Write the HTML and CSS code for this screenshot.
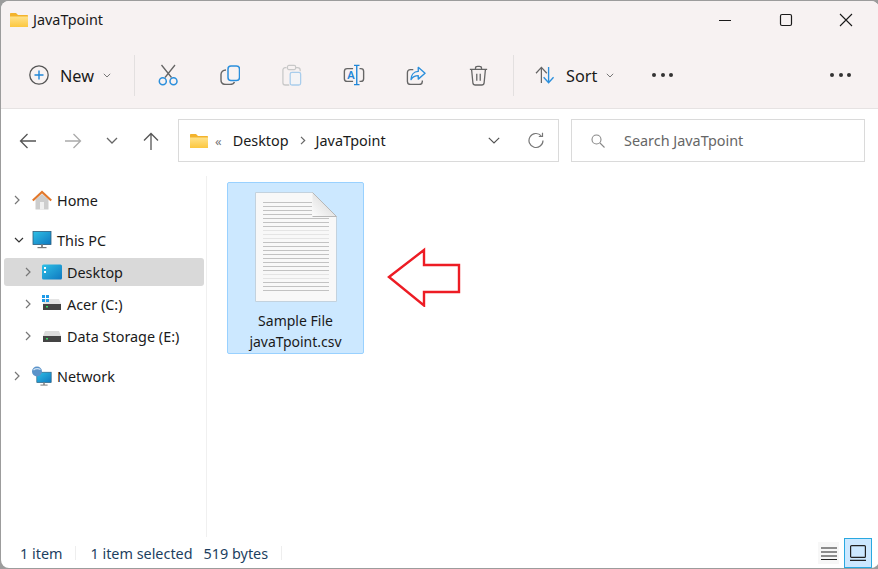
FILE: index.html
```html
<!DOCTYPE html>
<html lang="en">
<head>
  <meta charset="UTF-8" />
  <title>JavaTpoint</title>
  <link rel="stylesheet" href="styles.css">
</head>
<body>
  <div class="window">
    <div class="header">
      <div class="titlebar">
        <svg class="title-folder" width="18" height="14" viewBox="0 0 18 14"><use href="#folder"/></svg>
        <span class="title-text">JavaTpoint</span>
        <div class="win-buttons">
          <svg width="14" height="14" viewBox="0 0 14 14"><path d="M1 7.500h12" stroke="#1a1a1a" stroke-width="1"/></svg>
          <svg width="14" height="14" viewBox="0 0 14 14"><rect x="1.500" y="1.500" width="11" height="11" rx="1.500" fill="none" stroke="#1a1a1a" stroke-width="1.200"/></svg>
          <svg width="14" height="14" viewBox="0 0 14 14"><path d="M1 1l12 12M13 1L1 13" stroke="#1a1a1a" stroke-width="1.100"/></svg>
        </div>
      </div>
      <div class="toolbar">
        <div class="tool-new">
          <svg width="22" height="22" viewBox="0 0 22 22"><circle cx="11" cy="11" r="9.200" fill="none" stroke="#555" stroke-width="1.300"/><path d="M11 6.500v9M6.500 11h9" stroke="#1f86d8" stroke-width="1.400"/></svg>
          <span>New</span>
          <svg class="caret" width="8" height="5" viewBox="0 0 8 5"><path d="M.8.8L4 4l3.200-3.200" fill="none" stroke="#777"/></svg>
        </div>
        <div class="sep"></div>
        <div class="tool tool-first">
          <svg width="20" height="22" viewBox="0 0 20 22"><path d="M3.500 1l10 12.500M17 1L7 13.500" fill="none" stroke="#666" stroke-width="1.300"/><circle cx="4.800" cy="17.200" r="3.500" fill="none" stroke="#2b8fdc" stroke-width="1.500"/><circle cx="15.500" cy="17.200" r="3.500" fill="none" stroke="#2b8fdc" stroke-width="1.500"/></svg>
        </div>
        <div class="tool">
          <svg width="20" height="20" viewBox="0 0 20 20"><path d="M6 5C3 5 1 7 1 9.500V15c0 3 2 4.500 5 4.500h4c2.500 0 4-1 4.500-2.500" fill="none" stroke="#666" stroke-width="1.400"/><rect x="8" y="1" width="11.500" height="14.500" rx="3" fill="none" stroke="#2b8fdc" stroke-width="1.500"/></svg>
        </div>
        <div class="tool">
          <svg width="20" height="22" viewBox="0 0 22 24"><path d="M5 4H3.500C2 4 1 5 1 6.500v14C1 22 2 23 3.500 23H8M15 4h2C19 4 20 5 20 6.500V8" fill="none" stroke="#c8c8c8" stroke-width="1.400"/><rect x="6" y="1.500" width="9" height="4.500" rx="1.500" fill="none" stroke="#c8c8c8" stroke-width="1.300"/><rect x="9" y="9" width="11.500" height="14" rx="2" fill="#f4f4f6" stroke="#a9cdec" stroke-width="1.400"/></svg>
        </div>
        <div class="tool">
          <svg width="22" height="22" viewBox="0 0 24 24"><path d="M11 5H4.500C2.500 5 1.500 6 1.500 8v8c0 2 1 3 3 3H11M18 5h1.500c2 0 3 1 3 3v8c0 2-1 3-3 3H18" fill="none" stroke="#666" stroke-width="1.500"/><path d="M12 1.500h6M15 1.500v21M12 22.500h6" fill="none" stroke="#1f86d8" stroke-width="1.500"/><text class="rename-a" x="4.500" y="16.500">A</text></svg>
        </div>
        <div class="tool">
          <svg width="20" height="19" viewBox="0 0 22 21"><path d="M8 4H5C3 4 1.500 5.500 1.500 7.500v9.500c0 2 1.500 3.500 3.500 3.500h9.500c2 0 3.500-1.500 3.500-3.500v-1" fill="none" stroke="#666" stroke-width="1.500"/><path d="M13.500 1.500l7.500 6.500-7.500 6.500v-3.800c-3.500 0-6 1-8 4.300 0-5 3-8.700 8-9z" fill="none" stroke="#2b8fdc" stroke-width="1.500" stroke-linejoin="round"/></svg>
        </div>
        <div class="tool">
          <svg width="19" height="21" viewBox="0 0 22 24"><path d="M1 5h20M7.500 5V3.500C7.500 2 8.500 1.500 10 1.500h2c1.500 0 2.500.5 2.500 2V5M3 5l1.500 15.500C4.700 22 5.500 23 7.200 23h7.600c1.700 0 2.500-1 2.700-2.500L19 5M9 10v8M13 10v8" fill="none" stroke="#666" stroke-width="1.500"/></svg>
        </div>
        <div class="sep sep-sort"></div>
        <div class="tool-sort">
          <svg width="22" height="18" viewBox="0 0 22 20"><path d="M7 19V2M1 8l6-6.500L13 8" fill="none" stroke="#666" stroke-width="1.400"/><path d="M15 1v17.500M9.500 12.500l5.500 6 5.500-6" fill="none" stroke="#2b8fdc" stroke-width="1.500"/></svg>
          <span>Sort</span>
          <svg class="caret" width="8" height="5" viewBox="0 0 8 5"><path d="M.8.8L4 4l3.200-3.200" fill="none" stroke="#777"/></svg>
        </div>
        <div class="dots dots-first"><i></i><i></i><i></i></div>
        <div class="dots dots-last"><i></i><i></i><i></i></div>
      </div>
    </div>

    <div class="addressbar">
      <svg class="nav nav-back" width="18" height="16" viewBox="0 0 18 16"><path d="M17 8H1.500M8.500 1l-7 7 7 7" fill="none" stroke="#555" stroke-width="1.300"/></svg>
      <svg class="nav nav-forward" width="18" height="16" viewBox="0 0 18 16"><path d="M1 8h15.500M9.500 1l7 7-7 7" fill="none" stroke="#aaa" stroke-width="1.300"/></svg>
      <svg class="nav nav-down" width="12" height="8" viewBox="0 0 12 8"><path d="M1 1l5 5 5-5" fill="none" stroke="#666" stroke-width="1.300"/></svg>
      <svg class="nav nav-up" width="16" height="18" viewBox="0 0 16 18"><path d="M8 18V1.500M1 8.500l7-7 7 7" fill="none" stroke="#555" stroke-width="1.300"/></svg>
      <div class="address">
        <svg width="18" height="14" viewBox="0 0 18 14"><use href="#folder"/></svg>
        <span class="crumb-more">«</span>
        <span>Desktop</span>
        <svg class="crumb-sep" width="6" height="9" viewBox="0 0 6 9"><path d="M1 .8l3.700 3.700L1 8.200" fill="none" stroke="#666" stroke-width="1.200"/></svg>
        <span>JavaTpoint</span>
        <svg class="addr-down" width="12" height="7" viewBox="0 0 12 7"><path d="M.8.8L6 6 11.200.8" fill="none" stroke="#555" stroke-width="1.200"/></svg>
        <svg class="addr-refresh" width="16" height="17" viewBox="0 0 16 17"><path d="M13.200 3.800A7 7 0 1 0 15 8.500M14.500.8v3.700h-3.700" fill="none" stroke="#777" stroke-width="1.200"/></svg>
      </div>
      <div class="search">
        <svg width="14" height="14" viewBox="0 0 14 14"><circle cx="5.500" cy="5.500" r="4.500" fill="none" stroke="#888" stroke-width="1.100"/><path d="M9 9l4.500 4.500" stroke="#888" stroke-width="1.100"/></svg>
        <span>Search JavaTpoint</span>
      </div>
    </div>

    <div class="main">
      <div class="sidebar">
        <div class="nav-group">
          <div class="nav-row">
            <svg class="arrow" width="6" height="10" viewBox="0 0 6 10"><path d="M1 1l4 4-4 4" fill="none" stroke="#777" stroke-width="1.200"/></svg>
            <svg width="20" height="20" viewBox="0 0 20 20"><path d="M3.500 9.500L10 4l6.500 5.500V19.500h-13z" fill="#cdcdcd"/><rect x="8" y="12" width="4" height="7.500" fill="#f0f0f0"/><path d="M.8 10.500L10 2l9.200 8.500" fill="none" stroke="#e2782c" stroke-width="2.200"/></svg>
            <span>Home</span>
          </div>
        </div>
        <div class="nav-group">
          <div class="nav-row">
            <svg class="arrow" width="10" height="6" viewBox="0 0 10 6"><path d="M1 1l4 4 4-4" fill="none" stroke="#333" stroke-width="1.200"/></svg>
            <svg width="20" height="20" viewBox="0 0 20 20"><use href="#monitor"/></svg>
            <span>This PC</span>
          </div>
          <div class="nav-row sub">
            <div class="row-active"></div>
            <svg class="arrow" width="6" height="10" viewBox="0 0 6 10"><path d="M1 1l4 4-4 4" fill="none" stroke="#777" stroke-width="1.200"/></svg>
            <svg width="20" height="16" viewBox="0 0 20 16"><defs><linearGradient id="desk" x1="0" y1="0" x2="1" y2="1"><stop offset="0" stop-color="#2fc0e6"/><stop offset="1" stop-color="#0f78c0"/></linearGradient></defs><rect x="0" y="0.500" width="20" height="15" rx="1.500" fill="url(#desk)"/><rect x="2" y="3" width="2" height="2" fill="#fff"/><rect x="2" y="7" width="2" height="2" fill="#fff"/></svg>
            <span>Desktop</span>
          </div>
          <div class="nav-row sub">
            <svg class="arrow" width="6" height="10" viewBox="0 0 6 10"><path d="M1 1l4 4-4 4" fill="none" stroke="#777" stroke-width="1.200"/></svg>
            <svg width="20" height="18" viewBox="0 0 20 18"><path d="M3 4h14l2 5H1z" fill="#e4e4e4"/><rect x="1" y="9" width="18" height="6" fill="#444"/><rect x="4" y="11" width="2" height="1.500" fill="#3ddc6a"/><path d="M0 0h3v3H0zM4 0h3v3H4zM0 4h3v3H0zM4 4h3v3H4z" fill="#1f9be8"/></svg>
            <span>Acer (C:)</span>
          </div>
          <div class="nav-row sub">
            <svg class="arrow" width="6" height="10" viewBox="0 0 6 10"><path d="M1 1l4 4-4 4" fill="none" stroke="#777" stroke-width="1.200"/></svg>
            <svg width="20" height="18" viewBox="0 0 20 18"><path d="M3 4h14l2 5H1z" fill="#dcdcdc"/><rect x="1" y="9" width="18" height="6" fill="#444"/><rect x="4" y="11" width="2" height="1.500" fill="#3ddc6a"/></svg>
            <span>Data Storage (E:)</span>
          </div>
        </div>
        <div class="nav-group">
          <div class="nav-row">
            <svg class="arrow" width="6" height="10" viewBox="0 0 6 10"><path d="M1 1l4 4-4 4" fill="none" stroke="#777" stroke-width="1.200"/></svg>
            <svg width="20" height="20" viewBox="0 0 20 20"><use href="#monitor" transform="translate(4 5) scale(.8)"/><circle cx="5" cy="5.500" r="5" fill="#5b93c9"/><path d="M1.500 4c2-1.500 4-2 7-.5" fill="none" stroke="#cfe2f3" stroke-width="1.300"/></svg>
            <span>Network</span>
          </div>
        </div>
      </div>

      <div class="content">
        <div class="tile">
          <svg class="doc" width="82" height="110" viewBox="0 0 82 110">
            <defs><linearGradient id="fold-fill" x1="0" y1="1" x2="1" y2="0"><stop offset="0" stop-color="#fdfdfd"/><stop offset="1" stop-color="#cfcfcf"/></linearGradient></defs>
            <path d="M.5.500h57l24 24v85H.5z" fill="#f8f8f8" stroke="#c3d2de"/>
            <path d="M57.500.500v24h24z" fill="url(#fold-fill)"/>
            <path d="M57.500.500L81.500 24.500H57.500" fill="none" stroke="#b7b7b7"/>
            <path d="M8 10.500h49M8 14.500h49M8 18.500h49M8 22.500h49M8 26.500h66M8 30.500h66M8 34.500h66M8 50.500h66M8 54.500h66M8 58.500h66M8 62.500h66M8 66.500h66M8 70.500h66M8 74.500h66M8 78.500h66M8 90.500h66M8 94.500h66M8 98.500h66" stroke="#c2c2c2"/>
            <path d="M8 38.500h66M8 42.500h66M8 46.500h66M8 82.500h66M8 86.500h66" stroke="#e4e4e4"/>
          </svg>
          <div class="tile-name">Sample File javaTpoint.csv</div>
        </div>
        <svg class="red-arrow" width="74" height="60" viewBox="0 0 74 60"><path d="M2 30L37 3v15h35v27H37v13.500z" fill="#fff" stroke="#ed1c24" stroke-width="2.400"/></svg>
      </div>
    </div>

    <div class="statusbar">
      <span class="count">1 item</span>
      <div class="status-sep sep-count"></div>
      <span class="selected">1 item selected</span>
      <span class="size">519 bytes</span>
      <div class="status-sep"></div>
      <div class="view-btns">
        <div class="view-list"><svg width="16" height="13" viewBox="0 0 16 13"><path d="M0 1h16M0 5h16M0 9h16M0 12.500h16" stroke="#222" stroke-width="1.100"/></svg></div>
        <div class="view-tiles"><svg width="16" height="16" viewBox="0 0 16 16"><rect x=".6" y=".6" width="14.800" height="11.800" rx="1" fill="none" stroke="#222" stroke-width="1.200"/><path d="M0 15.300h16" stroke="#222" stroke-width="1.200"/></svg></div>
      </div>
    </div>
  </div>

  <svg class="defs" width="0" height="0">
    <defs>
      <linearGradient id="folder-fill" x1="0" y1="0" x2="0" y2="1"><stop offset="0" stop-color="#ffe28a"/><stop offset="1" stop-color="#fcc73f"/></linearGradient>
      <symbol id="folder" viewBox="0 0 18 14"><path d="M0 1c0-.6.400-1 1-1h5l2 2h9c.6 0 1 .4 1 1v10c0 .6-.4 1-1 1H1c-.6 0-1-.4-1-1z" fill="#f3b32c"/><path d="M0 3.500h18V13c0 .6-.4 1-1 1H1c-.6 0-1-.4-1-1z" fill="url(#folder-fill)"/></symbol>
      <linearGradient id="screen-fill" x1="0" y1="0" x2="1" y2="1"><stop offset="0" stop-color="#2fc0e6"/><stop offset="1" stop-color="#0f78c0"/></linearGradient>
      <symbol id="monitor" viewBox="0 0 20 20"><rect x="1" y="1.500" width="18" height="13" fill="url(#screen-fill)" stroke="#2c5d7c" stroke-width=".8"/><rect x="9" y="14.500" width="2" height="3" fill="#8a8a8a"/><rect x="5.500" y="17" width="9" height="1.200" fill="#777"/></symbol>
    </defs>
  </svg>
</body>
</html>
```

FILE: styles.css
```css
* { box-sizing: border-box; }
html, body { margin: 0; height: 100%; }
body { background: #9c9c9c; font-family: "Noto Sans", Arial, sans-serif; font-size: 14.4px; color: #1a1a1a; overflow: hidden; }
.defs { display: block; height: 0; }

.window { width: 878px; height: 567px; margin-left: 1px; margin-top: 1px; margin-right: -1px; background: white; border-radius: 8px; overflow: hidden; display: flex; flex-direction: column; }

.header { height: 108px; flex: none; background: #f7f2f2; border-bottom: 1px solid #e6e3e3; }
.titlebar { height: 38px; display: flex; align-items: center; padding-left: 9px; }
.title-folder { margin-right: 5px; }
.title-text { font-size: 14.4px; margin-bottom: 2px; }
.win-buttons { margin-left: auto; display: flex; gap: 46.5px; padding-right: 26px; }

.toolbar { display: flex; align-items: center; height: 69px; padding-top: 3px; }
.tool-new { width: 133px; display: flex; align-items: center; padding-left: 27px; font-size: 16.3px; }
.tool-new span, .tool-sort span { margin-left: 10px; margin-top: 2px; }
.caret { margin-left: 9px; }
.sep { width: 1px; height: 41px; background: #e3e0e0; }
.tool { width: 62px; display: flex; justify-content: center; }
.tool-first { margin-left: 2px; }
.sep-sort { margin-left: 4px; }
.tool-sort { display: flex; align-items: center; padding-left: 20px; font-size: 16.3px; }
.dots { display: flex; gap: 4.5px; }
.dots i { width: 4px; height: 4px; border-radius: 50%; background: #333; }
.dots-first { margin-left: 38px; }
.dots-last { margin-left: auto; margin-right: 28px; }

.addressbar { height: 67px; flex: none; display: flex; align-items: center; padding: 0 14px 4px 0; }
.nav { flex: none; }
.nav-back { margin-left: 18px; }
.nav-forward { margin-left: 27px; }
.nav-down { margin-left: 24px; }
.nav-up { margin-left: 25px; }
.address, .search { height: 43px; border: 1.500px solid #dadada; display: flex; align-items: center; }
.address { width: 381px; margin-left: 19px; padding-left: 11px; }
.crumb-more { margin: 0 11px 0 7px; color: #777; font-size: 13px; }
.crumb-sep { margin: 0 10px 0 11px; }
.addr-down { margin-left: auto; }
.addr-refresh { margin: 0 14px 0 28px; }
.search { flex: 1; margin-left: 12px; padding-left: 19px; color: #666; }
.search span { margin-left: 19px; }

.main { flex: 1; display: flex; min-height: 0; }
.sidebar { width: 206px; flex: none; border-right: 1px solid #f0f0f0; padding-top: 8px; }
.nav-group { margin-bottom: 8px; }
.nav-row { position: relative; height: 32px; display: flex; align-items: center; padding-left: 31px; }
.nav-row.sub { padding-left: 41px; }
.nav-row > span, .nav-row > svg { position: relative; }
.nav-row > span { margin-left: 5px; }
.nav-row .arrow { position: absolute; left: 13px; }
.nav-row.sub .arrow { left: 24px; }
.row-active { position: absolute; left: 3px; right: 2px; top: 2px; bottom: 2px; background: #d9d9d9; border-radius: 3px; }

.content { flex: 1; display: flex; align-items: flex-start; padding: 6px 0 0 20px; }
.tile { width: 137px; height: 172px; background: #cce8ff; border: 1px solid #99d1ff; border-radius: 2px; display: flex; flex-direction: column; align-items: center; padding-top: 9px; }
.tile-name { width: 110px; margin-top: 8px; text-align: center; line-height: 21px; font-size: 14px; }
.red-arrow { margin: 65px 0 0 23px; }

.statusbar { height: 31px; flex: none; display: flex; align-items: center; color: #1d3f5f; padding-top: 1px; }
.count { margin-left: 19px; }
.sep-count { margin-left: 13px; margin-right: 14px; }
.size { margin-left: 11px; }
.status-sep { width: 1px; height: 14px; margin-left: 13px; background: #eee; }
.view-btns { margin-left: auto; display: flex; align-items: center; gap: 5px; padding-right: 7px; }
.view-list { width: 21px; height: 22px; display: flex; align-items: center; justify-content: center; background: #f7f7f7; }
.view-tiles { width: 28px; height: 30px; display: flex; align-items: center; justify-content: center; background: #cce8ff; border: 1px solid #29a8e0; }
.rename-a { font-family: "Noto Sans", Arial, sans-serif; font-size: 12px; font-weight: 600; fill: #1f86d8; }
```
